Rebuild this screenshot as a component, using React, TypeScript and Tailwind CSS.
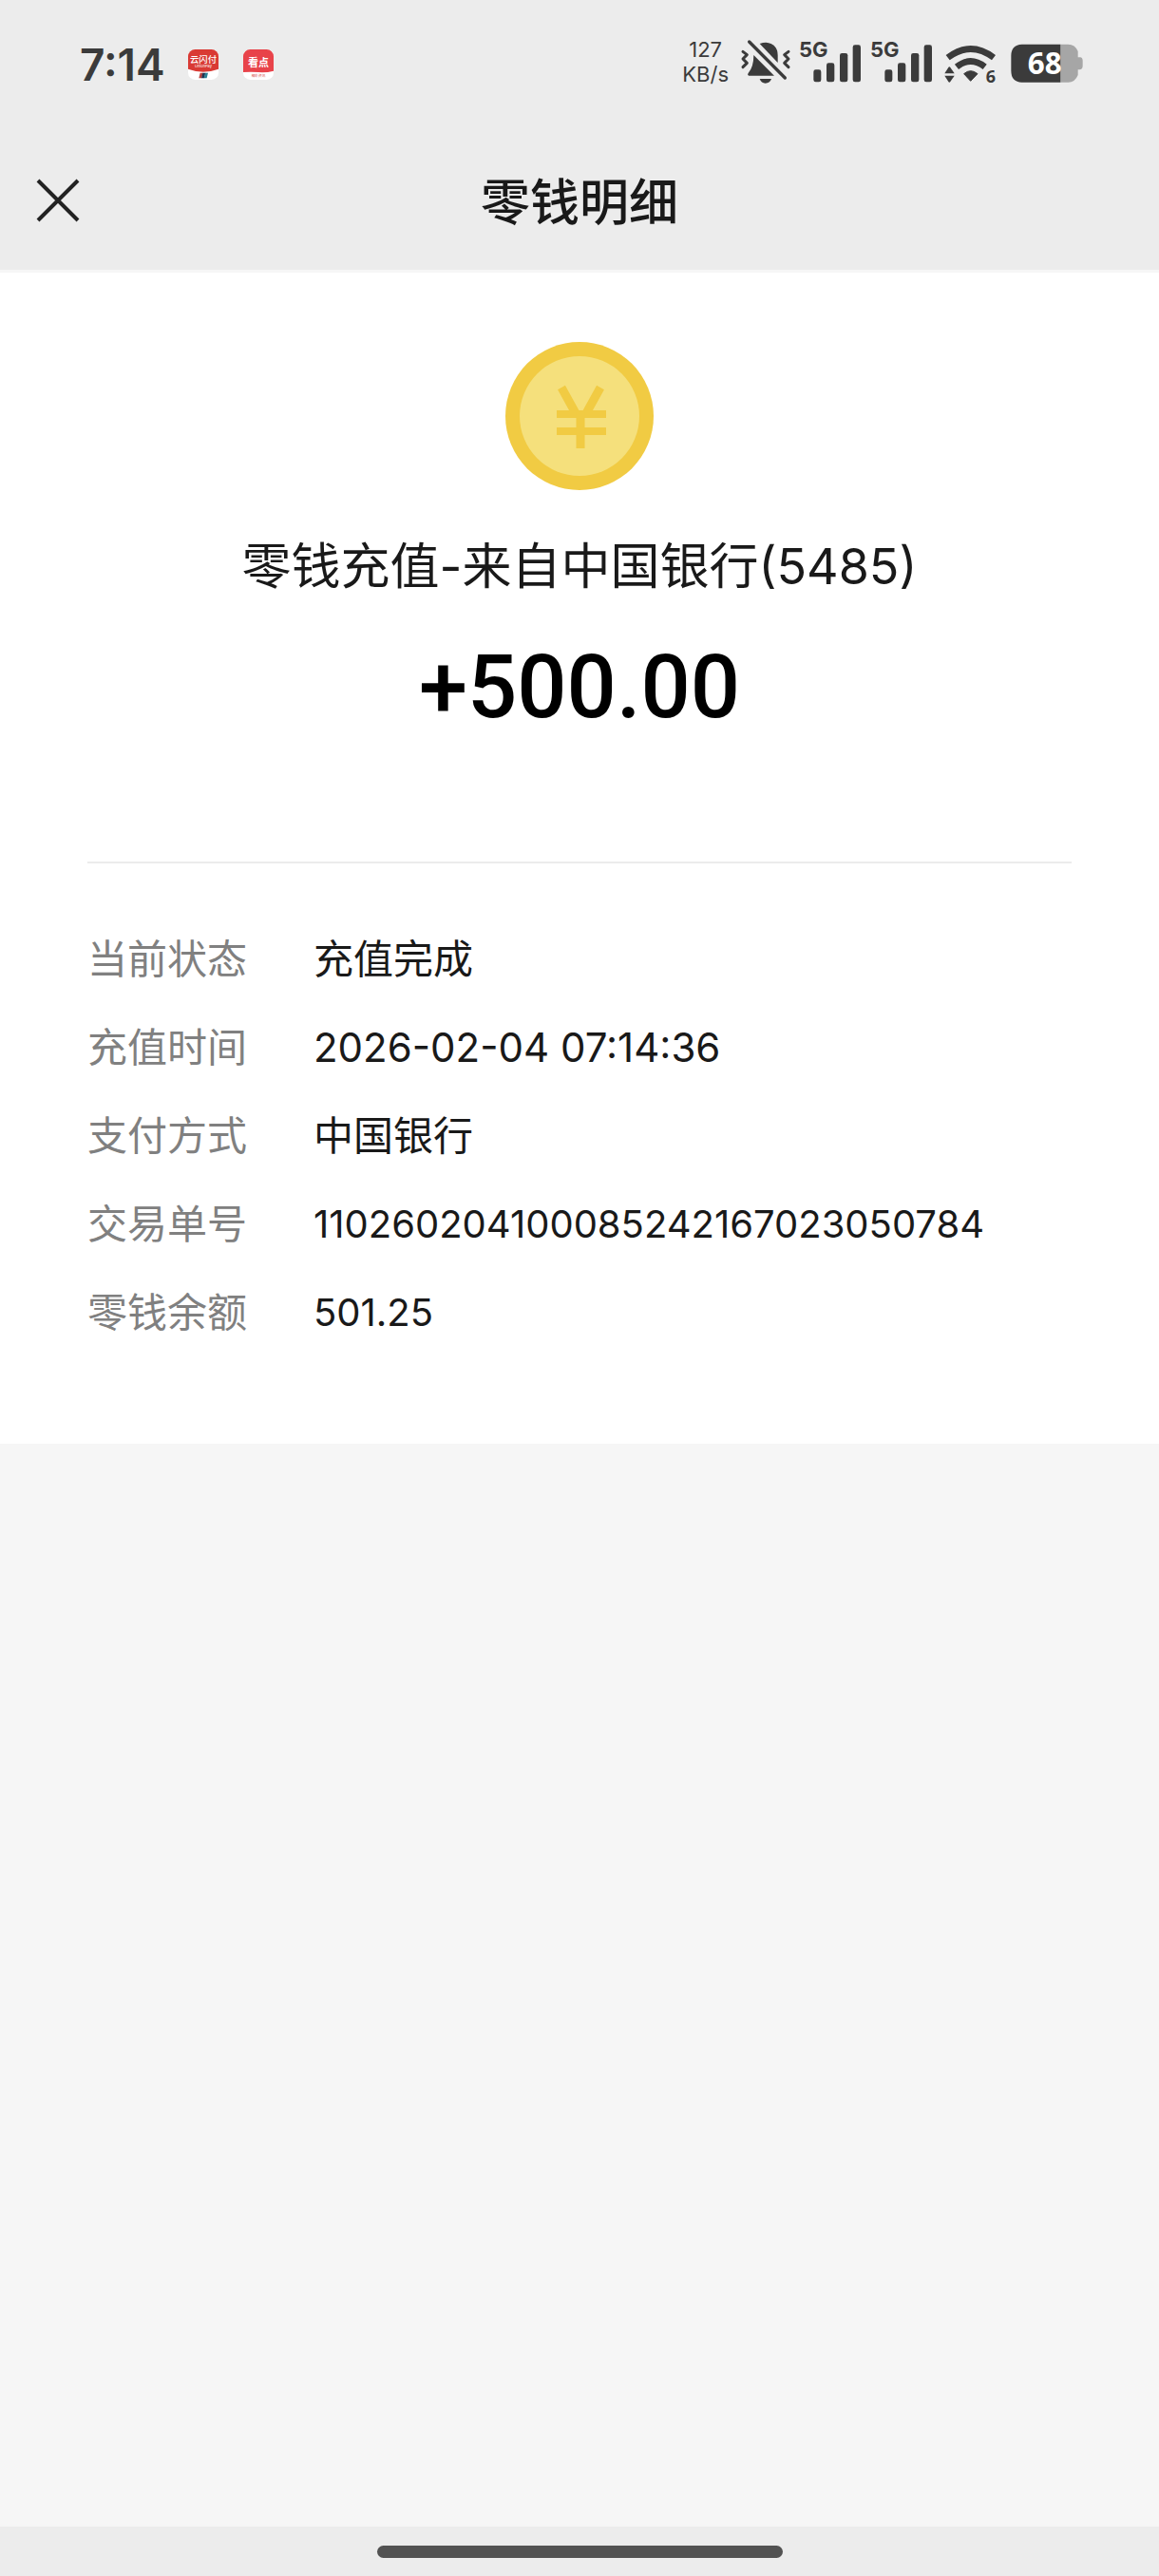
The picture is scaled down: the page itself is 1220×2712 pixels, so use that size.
import React from 'react';

const details = [
  { label: '当前状态', value: '充值完成' },
  { label: '充值时间', value: '2026-02-04 07:14:36' },
  { label: '支付方式', value: '中国银行' },
  { label: '交易单号', value: '110260204100085242167023050784', numeric: true },
  { label: '零钱余额', value: '501.25', numeric: true },
];

const UnionPayIcon = () => (
  <svg className="w-8 h-8" viewBox="0 0 96 96">
    <rect width="96" height="96" rx="22" fill="#fff" />
    <path d="M0 62V22A22 22 0 0 1 22 0H74A22 22 0 0 1 96 22V62Q48 80 0 62Z" fill="#d93a34" />
    <text x="48" y="41" textAnchor="middle" fontSize="28" fontWeight="500" fill="#fff">云闪付</text>
    <text x="48" y="57" textAnchor="middle" fontSize="12" fill="#fff">UnionPay</text>
    <path d="M38 74h9l-4 17h-9z" fill="#b8433f" />
    <path d="M46 74h9l-4 17h-9z" fill="#1f3350" />
    <path d="M54 74h9l-4 17h-9z" fill="#2a7f93" />
  </svg>
);

const NewsIcon = () => (
  <svg className="w-8 h-8" viewBox="0 0 96 96">
    <rect width="96" height="96" rx="22" fill="#fff" />
    <path d="M0 72V22A22 22 0 0 1 22 0H74A22 22 0 0 1 96 22V68Q72 74 48 72T0 72Z" fill="#e8434a" />
    <text x="48" y="54" textAnchor="middle" fontSize="33" fontWeight="700" fill="#fff">看点</text>
    <text x="48" y="87" textAnchor="middle" fontSize="11" fill="#d9534f">精彩资讯</text>
  </svg>
);

const MutedBell = () => (
  <svg className="w-[54px] h-12" viewBox="240 62 162 144" fill="#3b3b3b">
    <path d="M302 77Q312 73 322 73Q358 77 359 112V137Z" />
    <path d="M283 113L348 178H268Q262 176 266 170Q283 150 283 113Z" />
    <path d="M302 188H339Q334 202 320 202Q307 202 302 188Z" />
    <g fill="none" stroke="#3b3b3b" strokeLinecap="round" strokeLinejoin="round">
      <path d="M269 71L382 185" strokeWidth="10" />
      <path d="M249 102L262 112L249 125L262 138L249 151" strokeWidth="9" />
      <path d="M393 102L380 112L393 125L380 138L393 151" strokeWidth="9" />
    </g>
  </svg>
);

const Signal = () => (
  <div className="relative w-[66px] h-12">
    <svg className="w-full h-full" viewBox="428 62 198 144" fill="#3b3b3b">
      <rect x="474" y="159" width="24" height="39" rx="7" />
      <rect x="515" y="138" width="25" height="60" rx="7" />
      <rect x="557" y="107" width="25" height="91" rx="7" />
      <rect x="598" y="81" width="25" height="117" rx="7" />
    </svg>
    <span className="absolute left-0 top-0 text-[22px] leading-[22px] font-bold">5G</span>
  </div>
);

const Wifi = () => (
  <div className="relative w-[54px] h-12">
    <svg className="w-full h-full" viewBox="167 62 162 144" fill="#3b3b3b">
      <path d="M178 121Q250 66 323 121" fill="none" stroke="#3b3b3b" strokeWidth="20" />
      <path d="M206 150Q250 115 295 150" fill="none" stroke="#3b3b3b" strokeWidth="20" />
      <path d="M229 172Q250 154 272 172L250 195Z" stroke="#3b3b3b" strokeWidth="3" strokeLinejoin="round" />
      <path d="M168 171L180 152Q183 148 186 152L199 171Z" />
      <path d="M168 178L180 197Q183 201 186 197L199 178Z" />
    </svg>
    <span className="absolute right-0 bottom-0 text-[18px] leading-[18px] font-bold font-['Noto_Sans',sans-serif]">6</span>
  </div>
);

const Battery = () => (
  <svg className="w-[76px] h-12" viewBox="371 62 228 144">
    <path d="M528 79H552Q574 79 583 101V120H590Q598 121 598 131V147Q598 157 590 159H583V176Q574 199 552 199H528Z" fill="#a6a6a6" />
    <path d="M528 79H406Q372 81 372 115V163Q372 197 406 199H528Z" fill="#3b3b3b" />
    <text x="478" y="173" textAnchor="middle" fontSize="94" fontWeight="700" fill="#fff" className="font-['Noto_Sans',sans-serif]">68</text>
  </svg>
);

const StatusBar = () => (
  <div className="h-[136px] pl-[84px] pr-20 flex items-center justify-between text-[#3b3b3b]">
    <div className="flex items-center">
      <span className="w-[114px] text-[46px] font-semibold">7:14</span>
      <div className="flex gap-[26px]">
        <UnionPayIcon />
        <NewsIcon />
      </div>
    </div>
    <div className="pb-1.5 flex items-center">
      <div className="mr-3 text-center text-[22px] leading-[26px]">
        <div>127</div>
        <div>KB/s</div>
      </div>
      <MutedBell />
      <div className="ml-2 mr-3 flex gap-[9px]">
        <Signal />
        <Signal />
      </div>
      <Wifi />
      <div className="ml-4">
        <Battery />
      </div>
    </div>
  </div>
);

const CoinIcon = () => (
  <svg className="w-[156px] h-[156px]" viewBox="0 0 156 156">
    <circle cx="78" cy="78" r="78" fill="#f1cb43" />
    <circle cx="78" cy="78" r="63" fill="#f5e07c" />
    <g fill="none" stroke="#f1cb43">
      <path d="M59 48L75 77M100 48L84 77" strokeWidth="9" />
      <path d="M54 76H106M54 94H106" strokeWidth="8" />
      <path d="M79 74V112" strokeWidth="9" />
    </g>
  </svg>
);

const App = () => {
  return (
    <div className="min-h-screen flex flex-col bg-[#f6f6f6] text-[#191919] font-[Inter,'Noto_Sans_CJK_SC',sans-serif]">
      {/* Header */}
      <header className="bg-[#ececec] border-b-3 border-[#f6f6f6]">
        <StatusBar />
        <div className="mt-2 h-[140px] px-[38px] grid grid-cols-[1fr_auto_1fr] items-center">
          <button aria-label="关闭" className="mb-1.5 w-[46px] h-[46px] cursor-pointer">
            <svg className="w-full h-full" viewBox="0 0 46 46" fill="none" stroke="#222" strokeWidth="4">
              <path d="M2 2L44 44M44 2L2 44" />
            </svg>
          </button>
          <h1 className="text-[52px] font-medium">零钱明细</h1>
        </div>
      </header>

      {/* Transaction */}
      <main className="bg-white px-[92px] pt-[73px] pb-[92px]">
        <div className="flex flex-col items-center">
          <CoinIcon />
          <p className="mt-[45px] text-[52px] leading-[72px]">零钱充值-来自中国银行(5485)</p>
          <p className="mt-9 text-[92px] leading-[110px] font-medium text-black font-[Roboto,sans-serif]">+500.00</p>
        </div>

        <dl className="mt-[128px] pt-[54px] border-t-2 border-[#ececec] text-[42px] leading-[93px]">
          {details.map((item) => (
            <div key={item.label} className="flex">
              <dt className="w-[238px] text-[#808080]">{item.label}</dt>
              <dd className={item.numeric ? 'text-[40px]' : ''}>{item.value}</dd>
            </div>
          ))}
        </dl>
      </main>

      {/* Gesture bar */}
      <footer className="mt-auto h-[52px] bg-[#ececec] flex justify-center items-center">
        <div className="w-[35%] h-[13px] rounded-full bg-[#525252]" />
      </footer>
    </div>
  );
};

export default App;
